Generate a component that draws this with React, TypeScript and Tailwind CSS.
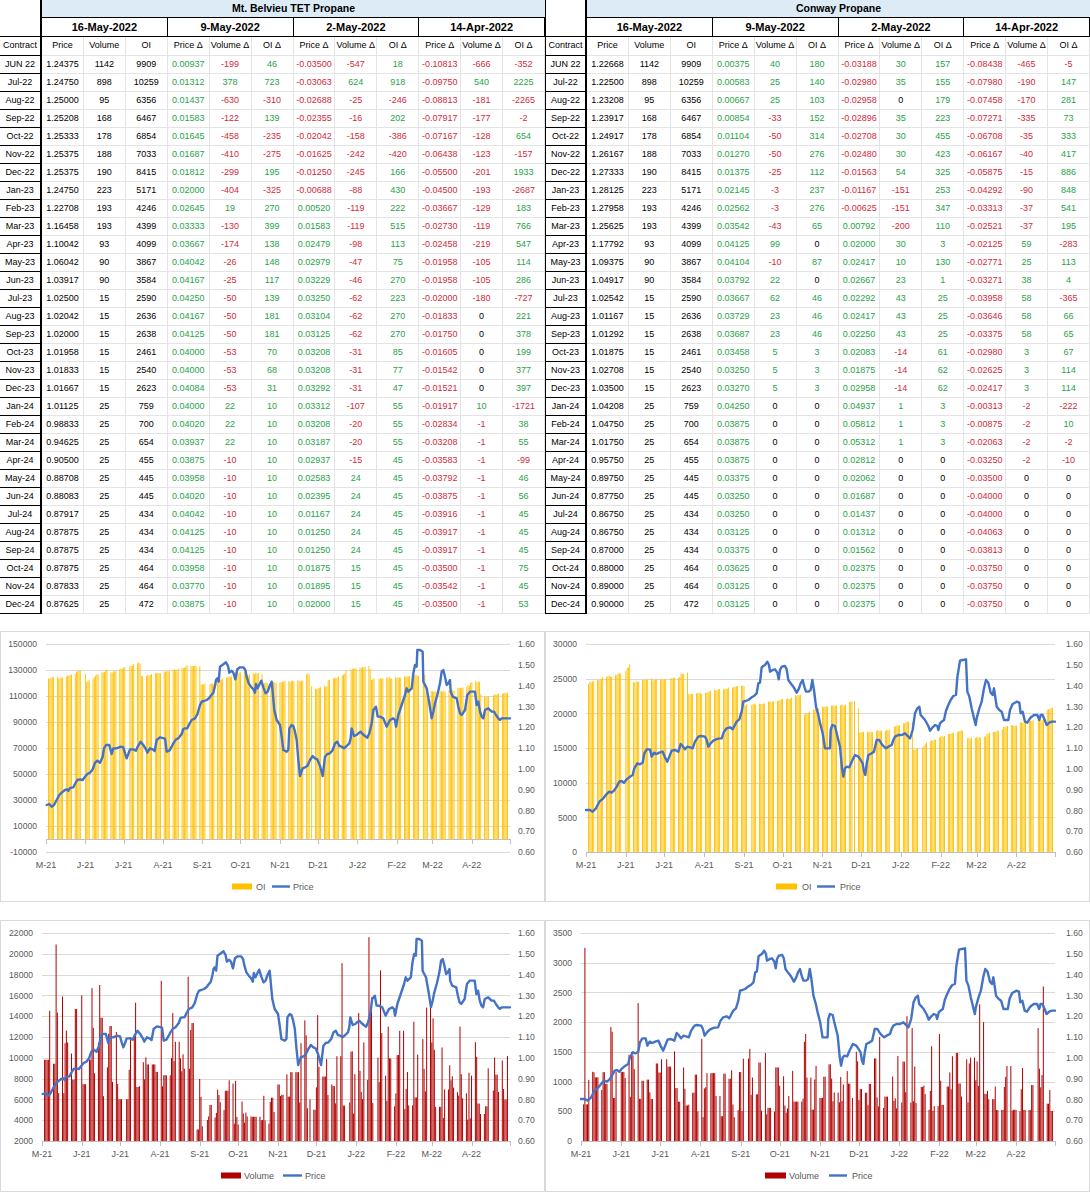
import React from "react";

const FONT = "Liberation Sans, Arial, sans-serif";

const parse = (s: string) =>
  s
    .trim()
    .split("\n")
    .map((r) => r.trim().split("|"));

const BELVIEU = parse(`
JUN 22|1.24375|1142|9909|0.00937|-199|46|-0.03500|-547|18|-0.10813|-666|-352
Jul-22|1.24750|898|10259|0.01312|378|723|-0.03063|624|918|-0.09750|540|2225
Aug-22|1.25000|95|6356|0.01437|-630|-310|-0.02688|-25|-246|-0.08813|-181|-2265
Sep-22|1.25208|168|6467|0.01583|-122|139|-0.02355|-16|202|-0.07917|-177|-2
Oct-22|1.25333|178|6854|0.01645|-458|-235|-0.02042|-158|-386|-0.07167|-128|654
Nov-22|1.25375|188|7033|0.01687|-410|-275|-0.01625|-242|-420|-0.06438|-123|-157
Dec-22|1.25375|190|8415|0.01812|-299|195|-0.01250|-245|166|-0.05500|-201|1933
Jan-23|1.24750|223|5171|0.02000|-404|-325|-0.00688|-88|430|-0.04500|-193|-2687
Feb-23|1.22708|193|4246|0.02645|19|270|0.00520|-119|222|-0.03667|-129|183
Mar-23|1.16458|193|4399|0.03333|-130|399|0.01583|-119|515|-0.02730|-119|766
Apr-23|1.10042|93|4099|0.03667|-174|138|0.02479|-98|113|-0.02458|-219|547
May-23|1.06042|90|3867|0.04042|-26|148|0.02979|-47|75|-0.01958|-105|114
Jun-23|1.03917|90|3584|0.04167|-25|117|0.03229|-46|270|-0.01958|-105|286
Jul-23|1.02500|15|2590|0.04250|-50|139|0.03250|-62|223|-0.02000|-180|-727
Aug-23|1.02042|15|2636|0.04167|-50|181|0.03104|-62|270|-0.01833|0|221
Sep-23|1.02000|15|2638|0.04125|-50|181|0.03125|-62|270|-0.01750|0|378
Oct-23|1.01958|15|2461|0.04000|-53|70|0.03208|-31|85|-0.01605|0|199
Nov-23|1.01833|15|2540|0.04000|-53|68|0.03208|-31|77|-0.01542|0|377
Dec-23|1.01667|15|2623|0.04084|-53|31|0.03292|-31|47|-0.01521|0|397
Jan-24|1.01125|25|759|0.04000|22|10|0.03312|-107|55|-0.01917|10|-1721
Feb-24|0.98833|25|700|0.04020|22|10|0.03208|-20|55|-0.02834|-1|38
Mar-24|0.94625|25|654|0.03937|22|10|0.03187|-20|55|-0.03208|-1|55
Apr-24|0.90500|25|455|0.03875|-10|10|0.02937|-15|45|-0.03583|-1|-99
May-24|0.88708|25|445|0.03958|-10|10|0.02583|24|45|-0.03792|-1|46
Jun-24|0.88083|25|445|0.04020|-10|10|0.02395|24|45|-0.03875|-1|56
Jul-24|0.87917|25|434|0.04042|-10|10|0.01167|24|45|-0.03916|-1|45
Aug-24|0.87875|25|434|0.04125|-10|10|0.01250|24|45|-0.03917|-1|45
Sep-24|0.87875|25|434|0.04125|-10|10|0.01250|24|45|-0.03917|-1|45
Oct-24|0.87875|25|464|0.03958|-10|10|0.01875|15|45|-0.03500|-1|75
Nov-24|0.87833|25|464|0.03770|-10|10|0.01895|15|45|-0.03542|-1|45
Dec-24|0.87625|25|472|0.03875|-10|10|0.02000|15|45|-0.03500|-1|53
`);

const CONWAY = parse(`
JUN 22|1.22668|1142|9909|0.00375|40|180|-0.03188|30|157|-0.08438|-465|-5
Jul-22|1.22500|898|10259|0.00583|25|140|-0.02980|35|155|-0.07980|-190|147
Aug-22|1.23208|95|6356|0.00667|25|103|-0.02958|0|179|-0.07458|-170|281
Sep-22|1.23917|168|6467|0.00854|-33|152|-0.02896|35|223|-0.07271|-335|73
Oct-22|1.24917|178|6854|0.01104|-50|314|-0.02708|30|455|-0.06708|-35|333
Nov-22|1.26167|188|7033|0.01270|-50|276|-0.02480|30|423|-0.06167|-40|417
Dec-22|1.27333|190|8415|0.01375|-25|112|-0.01563|54|325|-0.05875|-15|886
Jan-23|1.28125|223|5171|0.02145|-3|237|-0.01167|-151|253|-0.04292|-90|848
Feb-23|1.27958|193|4246|0.02562|-3|276|-0.00625|-151|347|-0.03313|-37|541
Mar-23|1.25625|193|4399|0.03542|-43|65|0.00792|-200|110|-0.02521|-37|195
Apr-23|1.17792|93|4099|0.04125|99|0|0.02000|30|3|-0.02125|59|-283
May-23|1.09375|90|3867|0.04104|-10|87|0.02417|10|130|-0.02771|25|113
Jun-23|1.04917|90|3584|0.03792|22|0|0.02667|23|1|-0.03271|38|4
Jul-23|1.02542|15|2590|0.03667|62|46|0.02292|43|25|-0.03958|58|-365
Aug-23|1.01167|15|2636|0.03729|23|46|0.02417|43|25|-0.03646|58|66
Sep-23|1.01292|15|2638|0.03687|23|46|0.02250|43|25|-0.03375|58|65
Oct-23|1.01875|15|2461|0.03458|5|3|0.02083|-14|61|-0.02980|3|67
Nov-23|1.02708|15|2540|0.03250|5|3|0.01875|-14|62|-0.02625|3|114
Dec-23|1.03500|15|2623|0.03270|5|3|0.02958|-14|62|-0.02417|3|114
Jan-24|1.04208|25|759|0.04250|0|0|0.04937|1|3|-0.00313|-2|-222
Feb-24|1.04750|25|700|0.03875|0|0|0.05812|1|3|-0.00875|-2|10
Mar-24|1.01750|25|654|0.03875|0|0|0.05312|1|3|-0.02063|-2|-2
Apr-24|0.95750|25|455|0.03875|0|0|0.02812|0|0|-0.03250|-2|-10
May-24|0.89750|25|445|0.03375|0|0|0.02062|0|0|-0.03500|0|0
Jun-24|0.87750|25|445|0.03250|0|0|0.01687|0|0|-0.04000|0|0
Jul-24|0.86750|25|434|0.03250|0|0|0.01437|0|0|-0.04000|0|0
Aug-24|0.86750|25|434|0.03125|0|0|0.01312|0|0|-0.04063|0|0
Sep-24|0.87000|25|434|0.03375|0|0|0.01562|0|0|-0.03813|0|0
Oct-24|0.88000|25|464|0.03625|0|0|0.02375|0|0|-0.03750|0|0
Nov-24|0.89000|25|464|0.03125|0|0|0.02375|0|0|-0.03750|0|0
Dec-24|0.90000|25|472|0.03125|0|0|0.02375|0|0|-0.03750|0|0
`);

const DATES = ["16-May-2022", "9-May-2022", "2-May-2022", "14-Apr-2022"];
const HEADS = [
  "Price",
  "Volume",
  "OI",
  "Price Δ",
  "Volume Δ",
  "OI Δ",
  "Price Δ",
  "Volume Δ",
  "OI Δ",
  "Price Δ",
  "Volume Δ",
  "OI Δ",
];

const valColor = (ci: number, v: string) => {
  if (ci < 4) return "text-black";
  if (v.startsWith("-")) return "text-[#d42a3c]";
  if (v === "0") return "text-black";
  return "text-[#1fa34a]";
};

function PriceTable({ title, rows, leftEdge }: { title: string; rows: string[][]; leftEdge: boolean }) {
  const contractBorder = leftEdge ? "border-l border-l-black" : "";
  return (
    <div className="grid w-[545px] grid-cols-[42px_repeat(12,minmax(0,1fr))]">
      <div className={`row-span-2 h-[37px] border-r-2 border-b border-black bg-white ${contractBorder}`} />
      <div className="col-span-12 flex h-[18px] items-center justify-center border-b border-black bg-[#ddebf7] text-[10.5px] font-bold">
        {title}
      </div>
      {DATES.map((d) => (
        <div
          key={d}
          className="col-span-3 flex h-[19px] items-center justify-center border-r border-b border-black text-[11px] font-bold"
        >
          {d}
        </div>
      ))}
      <div
        className={`flex h-[19px] items-center justify-center border-r-2 border-b border-black text-[9px] ${contractBorder}`}
      >
        Contract
      </div>
      {HEADS.map((h, i) => (
        <div
          key={i}
          className="flex h-[19px] items-center justify-center whitespace-nowrap border-r border-b border-[#e4e4e4] text-[9px]"
        >
          {h}
        </div>
      ))}
      {rows.map((r, ri) =>
        r.map((v, ci) =>
          ci === 0 ? (
            <div
              key={`${ri}-${ci}`}
              className={`flex h-[18px] items-center justify-center border-r-2 border-b border-black text-[9px] ${contractBorder}`}
            >
              {v}
            </div>
          ) : (
            <div
              key={`${ri}-${ci}`}
              className={`flex h-[18px] items-center justify-center border-r border-b border-[#e4e4e4] text-[9px] ${valColor(
                ci,
                v
              )}`}
            >
              {v}
            </div>
          )
        )
      )}
    </div>
  );
}

/* ---------------- chart data ---------------- */

function rng(seed: number) {
  let s = seed;
  return () => {
    s |= 0;
    s = (s + 0x6d2b79f5) | 0;
    let t = Math.imul(s ^ (s >>> 15), 1 | s);
    t = (t + Math.imul(t ^ (t >>> 7), 61 | t)) ^ t;
    return ((t ^ (t >>> 14)) >>> 0) / 4294967296;
  };
}

function interp(pts: number[][], x: number) {
  if (x <= pts[0][0]) return pts[0][1];
  for (let i = 1; i < pts.length; i++) {
    if (x <= pts[i][0]) {
      const [x0, v0] = pts[i - 1];
      const [x1, v1] = pts[i];
      return v0 + ((v1 - v0) * (x - x0)) / (x1 - x0 || 1);
    }
  }
  return pts[pts.length - 1][1];
}

const HOL = new Set([30, 65, 128, 208, 237, 261, 296, 349]);
const DAYS: number[] = [];
for (let d = 1; d <= 364; d++) {
  const dow = (6 + d) % 7;
  if (dow !== 0 && dow !== 6 && !HOL.has(d)) DAYS.push(d);
}

const tr = (ox: number, oy: number, pts: number[][]) => pts.map(([zx, zy]) => [ox + zx / 3, oy + zy / 3]);

const B_Z5 = [[140,525],[148,522],[155,530],[162,525],[170,510],[178,495],[185,488],[195,480],[202,478],[205,483],[210,474],[220,472],[225,462],[232,450],[240,448],[248,450],[255,440],[262,432],[270,428],[278,418],[285,398],[292,392],[300,398],[308,380],[312,355],[318,345],[328,345],[335,372],[340,355],[350,355],[362,350],[370,352],[375,370],[380,385],[385,372],[390,358],[400,358],[408,362],[412,352],[422,335],[430,345],[438,358],[442,368],[450,355],[458,358],[464,363],[470,330],[480,322],[495,326],[500,365],[508,362],[515,350],[520,340],[528,328],[535,325],[545,312],[550,297],[555,295],[562,295],[568,282],[575,270],[585,265],[592,253],[600,225],[605,215],[612,213],[620,210],[627,205],[632,198],[640,188],[645,168],[648,150],[652,145],[656,155],[660,110],[670,103],[678,97],[684,108],[688,128],[695,122],[700,128],[706,148],[712,118],[720,112],[730,112],[736,120],[740,140],[746,160],[753,170],[760,178],[765,188],[768,162],[773,175],[780,160],[784,152],[790,172],[797,190],[803,185],[810,165],[815,155]];
const B_Z10 = [[127,145],[133,210],[140,240],[150,255],[155,290],[160,330],[170,335],[175,330],[178,265],[185,255],[190,258],[195,275],[200,300],[205,360],[210,408],[218,385],[225,382],[232,378],[240,360],[248,348],[255,355],[262,358],[270,378],[278,408],[285,350],[292,342],[300,340],[308,330],[315,310],[322,305],[328,318],[335,320],[342,325],[350,318],[358,310],[362,295],[365,265],[372,288],[380,285],[385,280],[392,275],[398,282],[405,288],[412,293],[418,280],[425,250],[430,210],[438,200],[443,230],[448,230]];
const B_Z6 = [[0,260],[10,265],[20,290],[30,270],[40,265],[45,270],[48,290],[55,255],[65,225],[75,195],[80,175],[85,185],[95,175],[100,130],[105,105],[110,110],[112,60],[120,60],[128,65],[130,155],[140,175],[148,220],[155,265],[160,245],[165,220],[172,195],[180,160],[185,125],[190,120],[195,140],[200,165],[205,160],[210,150],[212,185],[218,200],[230,205],[235,230],[240,250],[245,255],[255,240],[262,195],[270,185],[285,185],[290,225],[295,215],[300,245],[305,260],[310,265],[315,240],[325,235],[335,245],[342,245],[348,255],[355,265],[360,270],[365,265],[375,265],[385,265],[390,265]];

const BELV_PRICE = [...tr(0, -1, B_Z5), ...tr(230, 9, B_Z10), ...tr(380, -1, B_Z6)].map(([x, y]) => [
  (x - 46) / 464,
  y,
]);

const C_Z11 = [[18,510],[30,510],[38,515],[48,505],[58,485],[70,475],[80,462],[88,455],[95,458],[102,452],[110,440],[118,425],[125,423],[132,428],[140,418],[150,410],[158,405],[163,385],[172,370],[180,373],[188,368],[193,340],[200,328],[210,328],[215,350],[222,338],[230,342],[238,338],[248,335],[255,352],[262,365],[268,350],[275,332],[285,330],[295,335],[302,312],[308,318],[315,328],[322,320],[330,322],[338,325],[345,305],[355,290],[362,288],[375,290],[380,300],[385,320],[392,310],[400,302],[408,298],[415,296],[425,295],[432,275],[440,265],[450,262],[458,268],[463,258],[470,245],[478,238],[485,215],[490,185],[497,183],[505,180],[515,172],[522,168],[530,160],[535,130],[540,128],[545,82],[550,78],[555,75],[562,65],[567,75],[570,95],[578,90],[585,88],[592,98],[596,118],[600,90],[605,80],[615,78],[620,88],[625,120],[632,130],[640,140],[650,158],[657,145],[662,130],[668,120],[673,140],[678,155],[685,155],[692,150],[697,120],[702,150],[708,200],[715,225],[720,248],[728,280],[735,325],[745,325],[750,325],[752,270],[757,255],[765,258],[770,280],[775,300],[780,320],[786,385],[790,410],[795,385],[800,380],[808,382],[815,365],[825,345],[835,350],[842,360],[848,370],[852,395],[856,405],[860,372],[865,345],[875,340],[882,335],[890,300],[898,300],[905,312],[912,320],[918,325],[925,320],[935,315],[940,300],[945,290],[955,285],[965,285],[975,280],[985,290],[990,295],[998,270],[1005,220],[1012,205],[1018,200],[1022,225],[1028,232],[1035,240],[1045,258],[1050,272],[1058,262],[1065,255],[1072,258],[1075,270],[1080,250],[1085,245],[1092,240],[1098,212],[1105,195],[1112,180],[1120,168],[1128,165],[1132,112],[1140,62],[1148,60],[1158,58],[1162,155],[1168,170],[1175,205],[1182,235],[1187,255],[1190,235],[1198,205],[1205,185],[1212,145],[1218,120],[1225,128],[1232,158],[1238,165],[1242,145],[1245,165],[1250,200],[1258,210],[1265,215],[1272,240],[1280,240],[1285,240],[1290,210],[1298,192],[1310,185],[1318,188],[1322,220],[1328,215],[1335,245],[1342,248],[1350,235],[1355,230],[1362,225],[1372,225],[1378,240],[1382,225],[1388,225],[1395,242],[1400,255],[1408,248],[1415,245],[1425,245]];

const CONW_PRICE = tr(35, 9, C_Z11).map(([x, y]) => [(x - 41) / 469, y]);

const OI1 = [[46,123],[58,125],[59,123.5],[75,127],[76,129],[85,131],[86,121],[95,124],[96,126],[110,131],[111,128],[140,136],[141,125],[160,128],[161,128],[185,132],[186,133],[200,133],[201,119],[215,120],[216,122],[232,125],[233,128],[245,128],[246,126],[262,128],[263,120],[305,122],[306,127],[311,127],[312,114],[327,118],[328,122],[345,127],[346,130],[370,133],[371,123],[390,124],[410,125],[411,126],[425,126],[426,113],[455,114],[456,116],[470,118],[471,121],[480,121],[481,109],[495,111],[496,111],[510,113]];

const OI2_Z = [[18,150],[25,150],[26,128],[58,120],[60,115],[80,110],[100,107],[135,95],[150,73],[155,73],[156,128],[180,124],[181,120],[215,115],[216,120],[240,118],[300,112],[301,100],[325,100],[326,162],[380,160],[381,155],[440,145],[460,145],[461,140],[495,138],[496,195],[545,190],[546,190],[600,180],[601,178],[640,175],[641,168],[672,165],[673,225],[690,215],[691,210],[735,200],[736,200],[790,195],[805,195],[806,185],[835,185],[836,278],[880,275],[881,272],[935,270],[936,260],[960,255],[961,250],[1000,245],[1001,330],[1035,318],[1036,310],[1085,290],[1100,285],[1150,270],[1151,235],[1160,232],[1161,295],[1220,290],[1221,280],[1270,268],[1271,262],[1310,255],[1311,250],[1350,242],[1400,240],[1401,210],[1425,200]];
const OI2 = tr(35, 9, OI2_Z).map(([x, y]) => [(x - 41) / 469, y]);

type Bar = { f: number; top: number };

const r1 = rng(11);
const BARS1: Bar[] = DAYS.map((d) => {
  const f = d / 365;
  const v = interp(OI1, 46 + f * 464) + (r1() - 0.5) * 1.2;
  return { f, top: 208 - v * 1.3 };
});

const r2 = rng(23);
const BARS2: Bar[] = DAYS.map((d) => {
  const f = d / 365;
  return { f, top: interp(OI2, f) + (r2() - 0.5) * 1.5 };
});

function volume(
  seed: number,
  segs: number[][],
  spikes: number[][],
  toTop: (v: number) => number
): Bar[] {
  const r = rng(seed);
  let prev = 0;
  const out = DAYS.map((d, i) => {
    const f = d / 365;
    const s = segs.find((sg) => f <= sg[0]) ?? segs[segs.length - 1];
    let v = s[1] + (s[2] - s[1]) * Math.pow(r(), 1.3);
    if (i > 0 && r() < 0.3) v = prev;
    prev = v;
    return { f, v };
  });
  spikes.forEach(([sf, sv]) => {
    let bi = 0;
    let bd = 9;
    out.forEach((o, i) => {
      const dd = Math.abs(o.f - sf);
      if (dd < bd) {
        bd = dd;
        bi = i;
      }
    });
    out[bi].v = sv;
  });
  return out.map((o) => ({ f: o.f, top: Math.min(221, toTop(o.v)) }));
}

const BARS3 = volume(
  37,
  [
    [0.02, 6, 15],
    [0.09, 5, 16],
    [0.2, 6, 14],
    [0.26, 6, 12],
    [0.33, 7, 14],
    [0.36, 2.8, 8],
    [0.5, 3.5, 8],
    [0.53, 6, 11],
    [0.6, 5, 13],
    [0.68, 4, 11],
    [0.84, 5, 15],
    [1.0, 4, 10.5],
  ],
  [
    [0.03, 20.9],
    [0.04, 15.9],
    [0.085, 16],
    [0.107, 16.7],
    [0.122, 17],
    [0.2, 15.3],
    [0.254, 17.4],
    [0.28, 14.3],
    [0.31, 17.8],
    [0.56, 13.6],
    [0.588, 14.1],
    [0.641, 19.1],
    [0.675, 14.3],
    [0.699, 21.6],
    [0.705, 15.8],
    [0.722, 18.4],
    [0.739, 13],
    [0.814, 11.8],
    [0.855, 11],
    [0.893, 13],
    [0.923, 11.5],
  ],
  (v) => 221 - (v - 2) * 10.4
);

const BARS4 = volume(
  53,
  [
    [0.1, 600, 1200],
    [0.2, 700, 1600],
    [0.33, 400, 1300],
    [0.5, 450, 1400],
    [0.6, 650, 1400],
    [0.84, 500, 1600],
    [1.0, 500, 1300],
  ],
  [
    [0.007, 3250],
    [0.059, 1920],
    [0.065, 1840],
    [0.121, 2320],
    [0.253, 1720],
    [0.357, 1550],
    [0.39, 1480],
    [0.47, 1670],
    [0.474, 1800],
    [0.578, 1500],
    [0.63, 1750],
    [0.69, 2100],
    [0.7, 1900],
    [0.757, 1800],
    [0.84, 2300],
    [0.85, 2000],
    [0.96, 1900],
    [0.975, 2600],
  ],
  (v) => 221 - (v * 208) / 3500
);

const TICKS = [0, 31, 61, 92, 123, 153, 184, 214, 245, 276, 304, 335, 365];
const MONTHS = ["M-21", "J-21", "J-21", "A-21", "S-21", "O-21", "N-21", "D-21", "J-22", "F-22", "M-22", "A-22"];
const RIGHT = ["1.60", "1.50", "1.40", "1.30", "1.20", "1.10", "1.00", "0.90", "0.80", "0.70", "0.60"];

type Legend = { sw: [number, number]; label: string; tx: number; ln: [number, number]; px: number };

function Chart({
  h,
  plotLeft,
  leftLabels,
  rightX,
  axisY,
  bars,
  barColor,
  barWidth,
  price,
  legend,
}: {
  h: number;
  plotLeft: number;
  leftLabels: string[];
  rightX: number;
  axisY: number;
  bars: Bar[];
  barColor: string;
  barWidth: number;
  price: number[][];
  legend: Legend;
}) {
  const R = 510;
  const X = (f: number) => plotLeft + f * (R - plotLeft);
  const n = leftLabels.length;
  const gy = (i: number, cnt: number) => 13 + (i * 208) / (cnt - 1);
  const pts = price.map(([f, y]) => `${X(f).toFixed(2)},${y.toFixed(2)}`).join(" ");
  const ink = "#595959";
  return (
    <svg width={543} height={h - 2} viewBox={`1 1 543 ${h - 2}`} className="block" fontFamily={FONT}>
      {leftLabels.map((_, i) => {
        const y = Math.round(gy(i, n)) + 0.5;
        return <line key={i} x1={plotLeft} x2={R} y1={y} y2={y} stroke="#d9d9d9" strokeWidth={1} />;
      })}
      {bars.map((b, i) => (
        <rect
          key={i}
          x={X(b.f) - barWidth / 2}
          y={b.top}
          width={barWidth}
          height={Math.max(0, axisY - b.top)}
          fill={barColor}
        />
      ))}
      <line x1={plotLeft} x2={R} y1={axisY + 0.5} y2={axisY + 0.5} stroke="#bfbfbf" strokeWidth={1} />
      {TICKS.map((t) => {
        const x = Math.round(X(t / 365)) + 0.5;
        return <line key={t} x1={x} x2={x} y1={axisY} y2={axisY + 5} stroke="#bfbfbf" strokeWidth={1} />;
      })}
      <polyline
        points={pts}
        fill="none"
        stroke="#4472c4"
        strokeWidth={2.4}
        strokeLinejoin="round"
        strokeLinecap="round"
      />
      {leftLabels.map((l, i) => (
        <text key={l} x={plotLeft - 9} y={gy(i, n) + 3.2} fontSize={8.6} fill={ink} textAnchor="end">
          {l}
        </text>
      ))}
      {RIGHT.map((l, i) => (
        <text key={l} x={rightX} y={gy(i, 11) + 3.2} fontSize={8.6} fill={ink}>
          {l}
        </text>
      ))}
      {MONTHS.map((m, i) => (
        <text key={i} x={X(TICKS[i] / 365)} y={236.5} fontSize={9} fill={ink} textAnchor="middle">
          {m}
        </text>
      ))}
      <rect x={legend.sw[0]} y={252.5} width={legend.sw[1] - legend.sw[0]} height={6} fill={barColor} />
      <text x={legend.tx} y={259} fontSize={9} fill={ink}>
        {legend.label}
      </text>
      <line x1={legend.ln[0]} x2={legend.ln[1]} y1={255.5} y2={255.5} stroke="#4472c4" strokeWidth={2.4} />
      <text x={legend.px} y={259} fontSize={9} fill={ink}>
        Price
      </text>
    </svg>
  );
}

export default function App() {
  return (
    <div className="w-[1090px] bg-white font-['Liberation_Sans',Arial,sans-serif] text-black">
      <div className="flex">
        <PriceTable title="Mt. Belvieu TET Propane" rows={BELVIEU} leftEdge={false} />
        <PriceTable title="Conway Propane" rows={CONWAY} leftEdge={true} />
      </div>
      <div className="mt-[17px] grid grid-cols-[545px_545px] gap-y-[18px]">
        <div className="h-[271px] border border-[#d9d9d9] bg-white">
          <Chart
            h={271}
            plotLeft={46}
            leftLabels={["150000", "130000", "110000", "90000", "70000", "50000", "30000", "10000", "-10000"]}
            rightX={518}
            axisY={208}
            bars={BARS1}
            barColor="#ffc000"
            barWidth={0.9}
            price={BELV_PRICE}
            legend={{ sw: [232, 252], label: "OI", tx: 256, ln: [272, 290], px: 293 }}
          />
        </div>
        <div className="h-[271px] border border-[#d9d9d9] bg-white">
          <Chart
            h={271}
            plotLeft={41}
            leftLabels={["30000", "25000", "20000", "15000", "10000", "5000", "0"]}
            rightX={521}
            axisY={221}
            bars={BARS2}
            barColor="#ffc000"
            barWidth={0.9}
            price={CONW_PRICE}
            legend={{ sw: [231, 252], label: "OI", tx: 257, ln: [272, 290], px: 295 }}
          />
        </div>
        <div className="h-[272px] border border-[#d9d9d9] bg-white">
          <Chart
            h={272}
            plotLeft={42}
            leftLabels={["22000", "20000", "18000", "16000", "14000", "12000", "10000", "8000", "6000", "4000", "2000"]}
            rightX={518}
            axisY={221}
            bars={BARS3}
            barColor="#b00000"
            barWidth={1}
            price={BELV_PRICE}
            legend={{ sw: [221, 241], label: "Volume", tx: 244, ln: [283, 302], px: 305 }}
          />
        </div>
        <div className="h-[272px] border border-[#d9d9d9] bg-white">
          <Chart
            h={272}
            plotLeft={36}
            leftLabels={["3500", "3000", "2500", "2000", "1500", "1000", "500", "0"]}
            rightX={521}
            axisY={221}
            bars={BARS4}
            barColor="#b00000"
            barWidth={1}
            price={CONW_PRICE}
            legend={{ sw: [220, 241], label: "Volume", tx: 244, ln: [284, 302], px: 307 }}
          />
        </div>
      </div>
    </div>
  );
}
